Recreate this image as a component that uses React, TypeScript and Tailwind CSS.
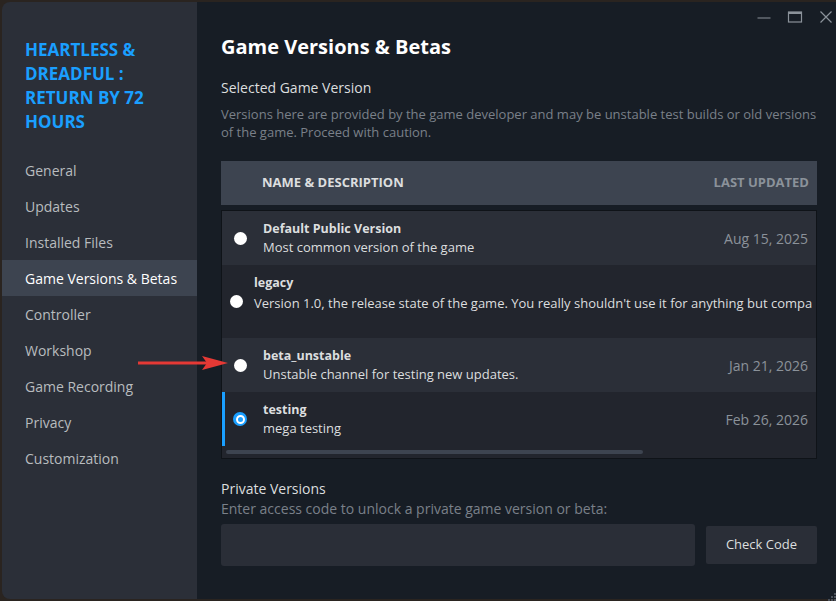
import { useState } from "react";

type Version = {
  id: string;
  name: string;
  desc: string;
  updated?: string;
  tall?: boolean;
};

const versions: Version[] = [
  { id: "public", name: "Default Public Version", desc: "Most common version of the game", updated: "Aug 15, 2025" },
  {
    id: "legacy",
    name: "legacy",
    desc: "Version 1.0, the release state of the game. You really shouldn't use it for anything but compa",
    tall: true,
  },
  { id: "beta_unstable", name: "beta_unstable", desc: "Unstable channel for testing new updates.", updated: "Jan 21, 2026" },
  { id: "testing", name: "testing", desc: "mega testing", updated: "Feb 26, 2026" },
];

const nav = [
  "General",
  "Updates",
  "Installed Files",
  "Game Versions & Betas",
  "Controller",
  "Workshop",
  "Game Recording",
  "Privacy",
  "Customization",
];

function Radio({ checked }: { checked: boolean }) {
  return (
    <span className="w-[14px] h-[14px] flex items-center justify-center shrink-0">
      {checked ? (
        <span className="w-[14px] h-[14px] rounded-full bg-[#1a9fff] flex items-center justify-center">
          <span className="block w-[9px] h-[9px] rounded-full border-2 border-white bg-[#1a9fff]" />
        </span>
      ) : (
        <span className="block w-[13px] h-[13px] rounded-full bg-white" />
      )}
    </span>
  );
}

export default function App() {
  const [selected, setSelected] = useState("testing");
  const [code, setCode] = useState("");

  return (
    <div
      className="relative w-[836px] h-[601px] overflow-hidden bg-[#2a2420] pt-[2px] pl-[2px] pb-[2px]"
      style={{ fontFamily: '"Open Sans", "Noto Sans", Arial, sans-serif' }}
    >
      <div className="flex h-full rounded-l-lg overflow-hidden">
        {/* sidebar */}
        <aside className="w-[195px] shrink-0 bg-[#2b2f38] pt-[36px]">
          <div className="pl-[23px] pr-4 text-[17px] leading-[24px] font-bold text-[#1a9fff] uppercase">
            Heartless &amp; Dreadful : Return by 72 Hours
          </div>
          <nav className="mt-[18px]">
            {nav.map((item) => (
              <div
                key={item}
                className={`h-[36px] flex items-center pl-[23px] text-[14px] ${
                  item === "Game Versions & Betas" ? "bg-[#3d4450] text-white" : "text-[#b8bcbf]"
                }`}
              >
                {item}
              </div>
            ))}
          </nav>
        </aside>

        {/* main */}
        <main className="flex-1 bg-[#171d25] flex flex-col pl-[24px] pr-[19px] min-w-0">
          <div className="h-[30px] flex items-start justify-end gap-[11px] -mr-[19px] shrink-0">
            <button className="w-[20px] h-[30px] flex items-center justify-center text-[#8b929a]">
              <svg width="14" height="14" viewBox="0 0 14 14">
                <path d="M0.5 8h13" stroke="currentColor" strokeWidth="1.2" />
              </svg>
            </button>
            <button className="w-[20px] h-[30px] flex items-center justify-center text-[#8b929a]">
              <svg width="16" height="14" viewBox="0 0 16 14">
                <rect x="1.5" y="2" width="13" height="10" fill="none" stroke="currentColor" strokeWidth="1.2" />
                <path d="M1.5 3h13" stroke="currentColor" strokeWidth="2" />
              </svg>
            </button>
            <button className="w-[20px] h-[30px] flex items-center justify-center text-[#8b929a]">
              <svg width="14" height="14" viewBox="0 0 14 14">
                <path d="M1.5 1.5l11 11M12.5 1.5l-11 11" stroke="currentColor" strokeWidth="1.2" />
              </svg>
            </button>
          </div>

          <h1 className="mt-[1px] text-[20px] leading-[28px] font-bold text-white">Game Versions &amp; Betas</h1>

          <div className="mt-[17px] text-[14px] leading-[20px] text-[#dcdedf]">Selected Game Version</div>
          <p className="mt-[7px] text-[13px] leading-[18px] text-[#7a8089]">
            Versions here are provided by the game developer and may be unstable test builds or old versions of the
            game. Proceed with caution.
          </p>

          {/* table */}
          <div className="mt-[20px] h-[44px] bg-[#3d4450] flex items-center pl-[41px] pr-[8px] text-[13px] font-bold uppercase">
            <span className="flex-1 text-[#dcdedf]">Name &amp; Description</span>
            <span className="text-[#8b929a]">Last Updated</span>
          </div>
          <div className="mt-[5px] border border-[#0f1318] bg-[#22252d]">
            {versions.map((v, i) => {
              const light = i % 2 === 0;
              const checked = selected === v.id;
              return (
                <div
                  key={v.id}
                  onClick={() => setSelected(v.id)}
                  className={`flex items-center cursor-pointer border-l-[3px] ${
                    checked ? "border-[#1a9fff]" : "border-transparent"
                  } ${light ? "bg-[#2b2f38]" : "bg-[#22252d]"} ${
                    v.tall ? "h-[73px] pl-[4px] overflow-hidden" : "h-[54px] pl-[8px] pr-[8px]"
                  }`}
                >
                  <Radio checked={checked} />
                  {v.tall ? (
                    <div className="ml-[11px] self-start pt-[8px] min-w-0 whitespace-nowrap">
                      <div className="text-[12.5px] leading-[19px] font-bold text-[#dcdedf]">{v.name}</div>
                      <div className="mt-[2px] text-[13px] leading-[19px] text-[#dcdedf]">{v.desc}</div>
                    </div>
                  ) : (
                    <>
                      <div className="ml-[16px] flex-1 min-w-0">
                        <div className="text-[12.5px] leading-[19px] font-bold text-[#dcdedf]">{v.name}</div>
                        <div className="text-[13px] leading-[19px] text-[#dcdedf]">{v.desc}</div>
                      </div>
                      <span className="text-[14px] text-[#8b929a]">{v.updated}</span>
                    </>
                  )}
                </div>
              );
            })}
            <div className="h-[12px] flex items-center pl-[4px]">
              <div className="h-[4px] w-[417px] rounded-full bg-[#3d4450]" />
            </div>
          </div>

          {/* private */}
          <div className="mt-[20px] text-[14px] leading-[20px] text-[#dcdedf]">Private Versions</div>
          <div className="text-[14px] leading-[20px] text-[#7a8089]">
            Enter access code to unlock a private game version or beta:
          </div>
          <div className="mt-[5px] flex items-center gap-[11px]">
            <input
              value={code}
              onChange={(e) => setCode(e.target.value)}
              className="flex-1 h-[42px] rounded-[3px] bg-[#2a2e37] px-3 text-[14px] text-white outline-none"
            />
            <button className="w-[111px] h-[38px] rounded-[2px] bg-[#2a2e37] text-[13px] text-[#dcdedf]">
              Check Code
            </button>
          </div>
        </main>
      </div>

      {/* annotation arrow */}
      <svg className="absolute left-[136px] top-[355px]" width="96" height="16" viewBox="0 0 96 16">
        <path d="M2 8h70" stroke="#e53935" strokeWidth="3" />
        <path d="M66 1l26 7-26 7 5-7z" fill="#e53935" />
      </svg>

      {/* resize grip */}
      <svg className="absolute right-0 bottom-0" width="10" height="10" viewBox="0 0 10 10">
        <rect x="8" y="2" width="2" height="2" fill="#4a505a" />
        <rect x="5" y="5" width="2" height="2" fill="#4a505a" />
        <rect x="8" y="5" width="2" height="2" fill="#4a505a" />
        <rect x="2" y="8" width="2" height="2" fill="#4a505a" />
        <rect x="5" y="8" width="2" height="2" fill="#4a505a" />
        <rect x="8" y="8" width="2" height="2" fill="#4a505a" />
      </svg>
    </div>
  );
}
